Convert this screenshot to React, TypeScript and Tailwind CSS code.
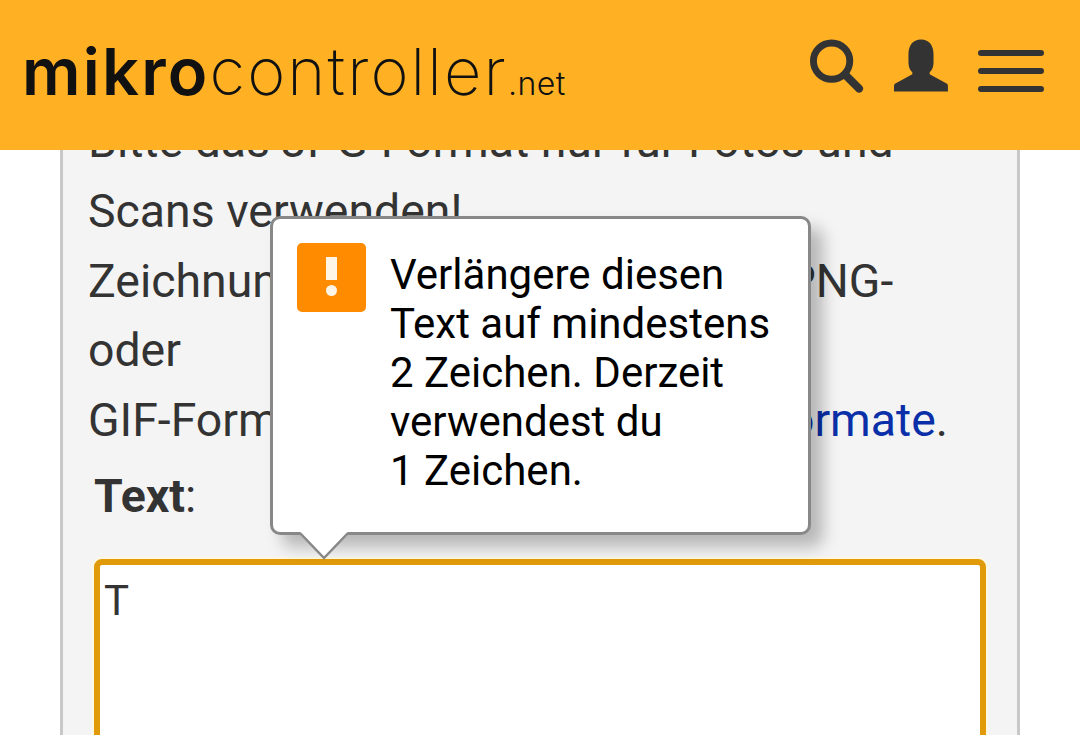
export default function App() {
  return (
    <div className="relative h-[735px] w-[1080px] overflow-hidden bg-white font-['Roboto',sans-serif] text-[#333]">
      <header className="relative z-10 flex h-[150px] items-start justify-between bg-[#ffb123] pl-[22px] pr-[36px]">
        <div className="mt-[32px] flex items-baseline whitespace-nowrap font-['Inter',sans-serif] text-[#111] leading-[80px]">
          <span className="text-[65px] font-semibold tracking-[2.2px]">mikro</span>
          <span className="text-[65px] font-extralight tracking-[2.1px]">controller</span>
          <span className="text-[32px] font-light tracking-[0.5px]">.net</span>
        </div>
        <div className="mt-[39px] flex items-start">
          <svg className="mr-[29px]" width="55" height="56" viewBox="0 0 56 56" fill="none" stroke="#333">
            <circle cx="22" cy="22" r="18.5" strokeWidth="7" />
            <path d="M36 36 L50 50" strokeWidth="8" strokeLinecap="round" />
          </svg>
          <svg className="mr-[30px]" width="54" height="55" viewBox="0 0 56 56" fill="#333">
            <path d="M28 0 C37 0 41 7 41 15 L41 24 C41 29 39 32 37 34 L37 36 L55 46 C56 47 56 48 56 54 L0 54 C0 48 0 47 1 46 L19 36 L19 34 C17 32 15 29 15 24 L15 15 C15 7 19 0 28 0 Z" />
          </svg>
          <div className="mt-[11px] flex w-[66px] flex-col gap-[12px]">
            <div className="h-[6px] rounded-full bg-[#333]" />
            <div className="h-[6px] rounded-full bg-[#333]" />
            <div className="h-[6px] rounded-full bg-[#333]" />
          </div>
        </div>
      </header>

      <main className="mx-[60px] -mt-[43px] h-[700px] border-x-[3px] border-[#c8c8c8] bg-[#f4f4f4] pl-[25px] pr-[31px]">
        <p className="text-[46.4px] leading-[69.8px] whitespace-nowrap">
          Bitte das JPG-Format nur für Fotos und
          <br />
          Scans verwenden!
          <br />
          Zeichnungen und Screenshots im PNG-
          <br />
          oder
          <br />
          GIF-Format hochladen. Siehe <a className="text-[#0a2fa8]">Bildformate</a>.
        </p>
        <div className="mt-[10px] pl-[6px] text-[46.4px] leading-[60px]">
          <b className="font-bold">Text</b>:
        </div>
        <div className="ml-[6px] mt-[33px] h-[300px] rounded-[8px] border-[6px] border-[#e09a0a] bg-white pl-[4px] pt-[11px] text-[42px] leading-[50px] shadow-[0_0_0_2px_#fff8e0]">
          T
        </div>
      </main>

      <div className="absolute left-[270px] top-[216px] z-20 flex h-[319px] w-[541px] rounded-[10px] border-[3px] border-[#888] bg-white pl-[24px] pt-[24px] text-black shadow-[12px_12px_16px_rgba(0,0,0,0.25)]">
        <div className="flex h-[69px] w-[69px] shrink-0 flex-col items-center rounded-[5px] bg-[#ff8c00] pt-[14px]">
          <div className="h-[23px] w-[11px] bg-[#fff5e6]" />
          <div className="mt-[5px] h-[11px] w-[11px] rounded-full bg-[#fff5e6]" />
        </div>
        <p className="ml-[24px] mt-[7px] whitespace-nowrap text-[42px] leading-[49px]">
          Verlängere diesen
          <br />
          Text auf mindestens
          <br />2 Zeichen. Derzeit
          <br />
          verwendest du
          <br />1 Zeichen.
        </p>
        <svg className="absolute left-[25px] top-[313px]" width="52" height="28" viewBox="0 0 52 28">
          <path d="M2 0 L26 26 L50 0 Z" fill="white" />
          <path d="M2 1 L26 26 L50 1" fill="none" stroke="#888" strokeWidth="2.5" />
        </svg>
      </div>
    </div>
  );
}
